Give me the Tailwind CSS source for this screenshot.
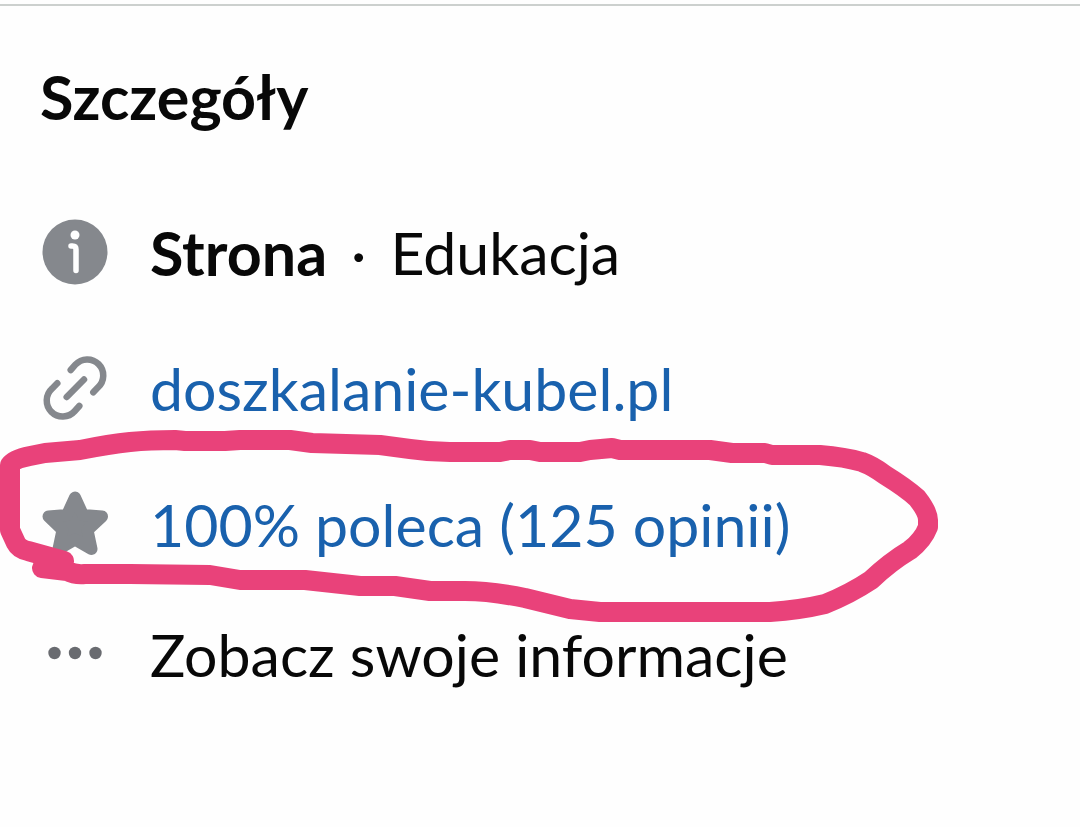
<!DOCTYPE html>
<html lang="pl">
<head>
    <meta charset="UTF-8">
    <meta name="viewport" content="width=device-width, initial-scale=1.0">
    <title>Szczegóły</title>
    <script src="https://cdn.jsdelivr.net/npm/@tailwindcss/browser@4"></script>
</head>
<body class="relative min-h-screen overflow-x-hidden bg-[#fefefe] font-['Lato','Noto_Sans',sans-serif] text-[59px] leading-[66px] text-[#080808]">

    <main class="px-10 pt-1">
        <hr class="-mx-10 border-t-2 border-[#ccd0ce]">

        <section class="pt-[58px]">
            <h1 class="mb-[90px] text-[61px] leading-[66px] font-bold">Szczegóły</h1>

            <ul class="flex flex-col gap-[70px]">
                <li class="flex items-start gap-10">
                    <svg class="size-[70px] -my-[3px] shrink-0" viewBox="0 0 70 70" fill="none" aria-hidden="true">
                        <circle cx="35" cy="35" r="32.5" fill="#85888d"/>
                        <circle cx="35" cy="18" r="4.5" fill="#fefefe"/>
                        <path d="M31 29h1.5q3.5 0 3.5 3.5v21" stroke="#fefefe" stroke-width="5.5" stroke-linecap="round" stroke-linejoin="round"/>
                    </svg>
                    <p class="flex gap-6"><strong class="text-[61px] leading-[66px] font-bold">Strona</strong> <span>·</span> <span>Edukacja</span></p>
                </li>
                <li class="flex items-start gap-10">
                    <svg class="size-[70px] -my-[3px] shrink-0" viewBox="0 0 70 70" fill="none" stroke="#85888d" stroke-width="6.5" stroke-linecap="round" aria-hidden="true">
                        <path d="M30.7 17l4.7-5.3A16 16 0 1 1 58 34.3l-4.7 5"/>
                        <path d="M17.3 30.3L12 35.7A16 16 0 1 0 34.6 58.3l4.7-5.3"/>
                        <path d="M26.7 44L44 26.5"/>
                    </svg>
                    <a href="#" class="text-[#1961ad]">doszkalanie-kubel.pl</a>
                </li>
                <li class="flex items-start gap-10">
                    <svg class="size-[70px] -my-[3px] shrink-0" viewBox="0 0 70 70" fill="#85888d" stroke="#85888d" stroke-width="12" stroke-linejoin="round" aria-hidden="true">
                        <path d="M35 8.5l8 17.5 19 1.5-14.5 13.5 4 19-16.5-9.5-16.5 9.5 4-19L8.5 27.5l18.5-1.5z"/>
                    </svg>
                    <a href="#" class="text-[#1961ad]">100% poleca (125 opinii)</a>
                </li>
            </ul>

            <button type="button" class="mt-16 flex items-start gap-10 text-left">
                <svg class="size-[70px] -my-[3px] shrink-0" viewBox="0 0 70 70" fill="#696b70" aria-hidden="true">
                    <circle cx="14.5" cy="34" r="6.2"/>
                    <circle cx="35" cy="34" r="6.2"/>
                    <circle cx="55.5" cy="34" r="6.2"/>
                </svg>
                <span>Zobacz swoje informacje</span>
            </button>
        </section>
    </main>

    <!-- hand-drawn marker around the rating -->
    <svg class="pointer-events-none absolute left-0 top-0" width="1080" height="827" viewBox="0 0 1080 827" fill="none" stroke="#e9427a" stroke-width="20" stroke-linecap="round" stroke-linejoin="round" aria-hidden="true">
        <path d="M64 561L28 551Q19 549 16 543L10 530V465Q14 459 30 456L45 453L80 450Q110 444 130 442Q150 440 175 440L185 441H225L240 440H290L312 443L380 445L410 449Q430 452 450 452H500L510 450H530L540 452H580L590 450L612 448L620 450H710L732 453H765L772 455H820Q845 457 862 462Q873 466 885 475Q906 488 917 498Q928 512 928 520V527Q923 540 910 550Q890 562 871 580Q850 594 825 604Q800 610 770 612H600L570 609L525 598Q490 591 465 591H430L395 586H360L305 580H240L210 575L130 574H85Q75 575 67 571L42 568"/>
    </svg>

</body>
</html>
